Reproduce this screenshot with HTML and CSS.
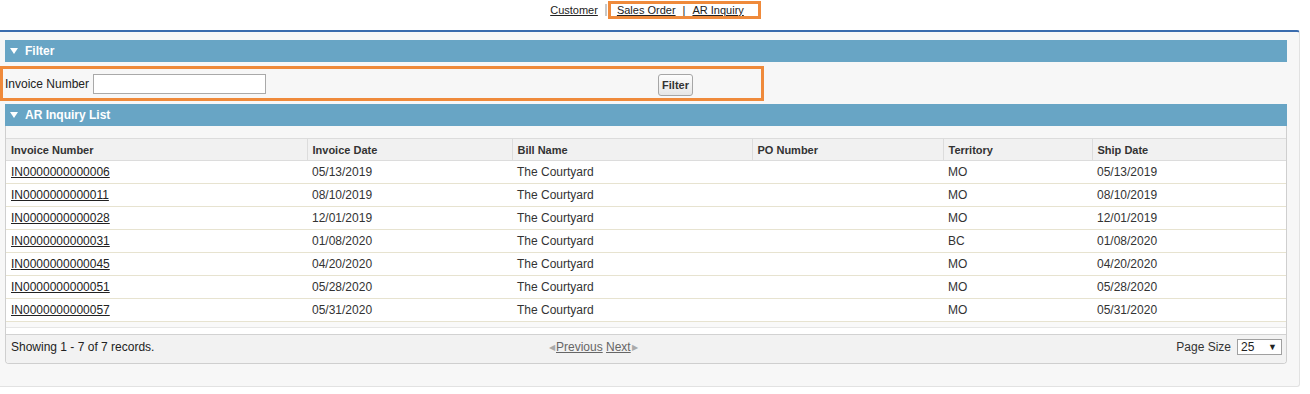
FILE: index.html
```html
<!DOCTYPE html>
<html lang="en">
<head>
  <meta charset="UTF-8">
  <title>AR Inquiry</title>
  <link rel="stylesheet" href="styles.css">
</head>
<body>

  <div class="topnav">
    <a href="#">Customer</a><span class="nav-sep"></span><span class="mark nav-mark"><a href="#">Sales Order</a><span class="nav-bar">|</span><a href="#">AR Inquiry</a></span>
  </div>

  <div class="page">
    <div class="section-head"><span class="caret"></span>Filter</div>

    <div class="mark filter-row">
      <label for="invNo">Invoice Number</label>
      <input type="text" id="invNo">
      <button type="button" class="btn">Filter</button>
    </div>

    <div class="section-head"><span class="caret"></span>AR Inquiry List</div>

    <div class="grid-panel">
      <div class="grid-toolbar"></div>
      <table class="grid">
        <colgroup>
          <col style="width:301px">
          <col style="width:205px">
          <col style="width:240px">
          <col style="width:191px">
          <col style="width:149px">
          <col style="width:194px">
        </colgroup>
        <thead>
          <tr>
            <th>Invoice Number</th>
            <th>Invoice Date</th>
            <th>Bill Name</th>
            <th>PO Number</th>
            <th>Territory</th>
            <th class="last">Ship Date</th>
          </tr>
        </thead>
        <tbody id="gridBody"></tbody>
      </table>
      <div class="grid-spacer"></div>
      <div class="pager">
        <div class="pager-info">Showing 1 - 7 of 7 records.</div>
        <div class="pager-nav">
          <span class="arrow">&#9664;</span><a href="#">Previous</a> <a href="#">Next</a><span class="arrow">&#9654;</span>
        </div>
        <div class="pager-size">
          Page Size
          <span class="select">25<span class="select-caret">&#9660;</span></span>
        </div>
      </div>
    </div>
  </div>

  <script>
    const rows = [
      ['IN0000000000006', '05/13/2019', 'MO', '05/13/2019'],
      ['IN0000000000011', '08/10/2019', 'MO', '08/10/2019'],
      ['IN0000000000028', '12/01/2019', 'MO', '12/01/2019'],
      ['IN0000000000031', '01/08/2020', 'BC', '01/08/2020'],
      ['IN0000000000045', '04/20/2020', 'MO', '04/20/2020'],
      ['IN0000000000051', '05/28/2020', 'MO', '05/28/2020'],
      ['IN0000000000057', '05/31/2020', 'MO', '05/31/2020']
    ];
    const body = document.getElementById('gridBody');

    rows.forEach(r => {
      const tr = document.createElement('tr');
      tr.innerHTML = `
        <td><a href="#">${r[0]}</a></td>
        <td>${r[1]}</td>
        <td>The Courtyard</td>
        <td></td>
        <td>${r[2]}</td>
        <td>${r[3]}</td>
      `;
      body.appendChild(tr);
    });
  </script>

</body>
</html>
```

FILE: styles.css
```css
:root {
  --head-blue: #68a5c5;
  --mark-orange: #ef8a3b;
  --row-line: #e7e3d0;
  --text: #222;
}

body {
  margin: 0;
  font-family: "Liberation Sans", Arial, sans-serif;
  font-size: 12px;
  color: var(--text);
  background: #fff;
}

a {
  color: var(--text);
}

/* top links */
.topnav {
  height: 30px;
  padding: 1px 0 0 1px;
  box-sizing: border-box;
  text-align: center;
  line-height: 12px;
  font-size: 11px;
}

.nav-sep {
  display: inline-block;
  width: 2px;
  height: 12px;
  background: #c8c8c8;
  margin: 0 1px 0 7px;
  vertical-align: -2px;
}

.mark {
  border: 3px solid var(--mark-orange);
  box-sizing: border-box;
}

.nav-mark {
  display: inline-block;
  padding: 0 14px 0 6px;
  line-height: 12px;
}

.nav-bar {
  margin: 0 7px;
}

/* main box */
.page {
  width: 1300px;
  height: 357px;
  box-sizing: border-box;
  border-top: 2px solid #3a6cae;
  border-right: 1px solid #e2e2e2;
  border-bottom: 1px solid #e2e2e2;
  border-radius: 0 3px 3px 0;
  background: #f7f7f7;
  padding: 8px 12px 0 5px;
}

.section-head {
  height: 22px;
  line-height: 22px;
  background: var(--head-blue);
  color: #fff;
  font-weight: bold;
  font-size: 12px;
  padding-left: 5px;
}

.caret {
  display: inline-block;
  width: 0;
  height: 0;
  border-left: 4px solid transparent;
  border-right: 4px solid transparent;
  border-top: 6px solid #fff;
  margin-right: 7px;
  vertical-align: 1px;
}

.filter-row {
  display: flex;
  align-items: center;
  width: 764px;
  height: 35px;
  margin: 4px 0 3px -5px;
  padding-left: 2px;
}

.filter-row input {
  width: 173px;
  height: 20px;
  box-sizing: border-box;
  margin: 0 0 0 4px;
  border: 1px solid #a9a9a9;
  background: #fff;
  padding: 0 3px;
}

.btn {
  margin-left: 392px;
  margin-top: 3px;
  height: 22px;
  padding: 0 3px;
  font-family: inherit;
  font-size: 11px;
  font-weight: bold;
  color: #333;
  background: linear-gradient(#fdfdfd, #e6e6e6);
  border: 1px solid #a6a6a6;
  border-radius: 3px;
}

/* grid */
.grid-panel {
  width: 1282px;
  box-sizing: border-box;
  border: 1px solid #cfcfcf;
  border-top: none;
  border-radius: 0 0 4px 4px;
  background: #fff;
  overflow: hidden;
}

.grid-toolbar {
  height: 12px;
  background: #f7f7f7;
  border-bottom: 1px solid #dcdcdc;
}

.grid {
  width: 1280px;
  border-collapse: collapse;
  table-layout: fixed;
}

.grid th {
  height: 21px;
  padding: 0 5px;
  text-align: left;
  font-size: 11px;
  font-weight: bold;
  color: #333;
  background: #f1f1f1;
  border-right: 1px solid #dcdcdc;
  border-bottom: 1px solid #dcdcdc;
}

.grid th.last {
  border-right: none;
}

.grid td {
  height: 22px;
  padding: 0 5px;
  color: #333;
  border-bottom: 1px solid var(--row-line);
  white-space: nowrap;
}

.grid td a {
  color: #222;
}

.grid-spacer {
  height: 5px;
  background: #f9f9f9;
  border-bottom: 1px solid #e6e6e6;
  margin-bottom: 6px;
}

.pager {
  display: flex;
  align-items: flex-start;
  height: 29px;
  box-sizing: border-box;
  padding: 5px 4px 0 5px;
  background: #f2f2f2;
  border-top: 1px solid #d2d2d2;
}

.pager-info {
  width: 537px;
}

.pager-nav {
  flex: 1;
  color: #777;
}

.pager-nav a {
  color: #666;
}

.arrow {
  font-size: 8px;
  color: #aaa;
  vertical-align: 1px;
  margin: 0 1px;
}

.pager-size {
  display: flex;
  align-items: center;
  gap: 6px;
  color: #333;
  margin-top: -1px;
}

.select {
  display: inline-flex;
  justify-content: space-between;
  align-items: center;
  width: 45px;
  height: 16px;
  box-sizing: border-box;
  padding: 0 4px 0 3px;
  background: #fff;
  border: 1px solid #a0a0a0;
  color: #222;
}

.select-caret {
  font-size: 9px;
}
```
